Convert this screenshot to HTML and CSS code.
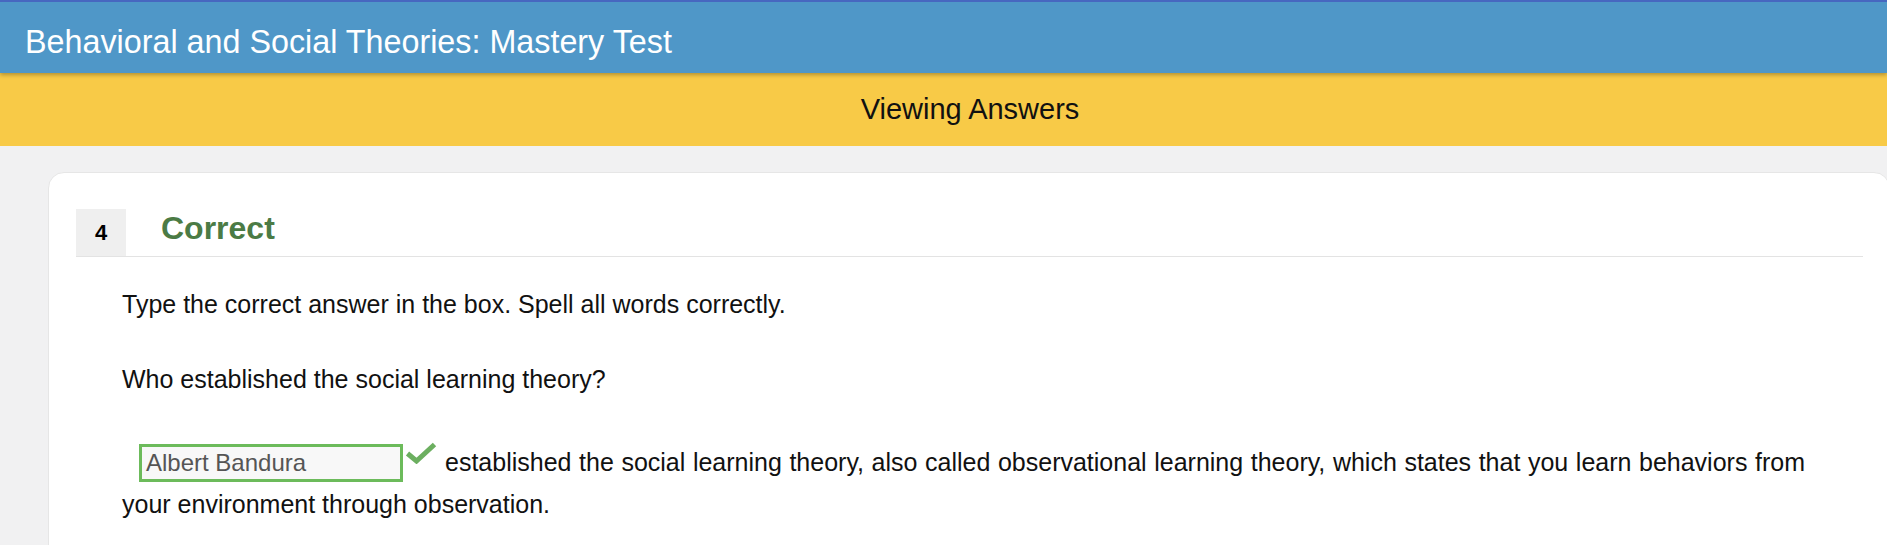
FILE: index.html
```html
<!DOCTYPE html>
<html lang="en">
<head>
<meta charset="utf-8">
<title>Behavioral and Social Theories: Mastery Test</title>
<link rel="stylesheet" href="styles.css">
</head>
<body>
<header class="topbar">
  <h1 class="test-title">Behavioral and Social Theories: Mastery Test</h1>
</header>
<div class="mode-bar">Viewing Answers</div>
<main class="page">
  <section class="card">
    <div class="q-header">
      <div class="q-number">4</div>
      <h2 class="q-status">Correct</h2>
    </div>
    <div class="q-body">
      <p class="q-instr">Type the correct answer in the box. Spell all words correctly.</p>
      <p class="q-question">Who established the social learning theory?</p>
      <p class="q-answer"><span class="answer-box">Albert Bandura</span><svg class="check" width="32" height="22" viewBox="0 0 32 22" aria-hidden="true"><path d="M2.5 11.5 L11.5 19 L29.5 2.5" fill="none" stroke="#6caf60" stroke-width="5" stroke-linecap="butt" stroke-linejoin="miter"/></svg>established the social learning theory, also called observational learning theory, which states that you learn behaviors from your environment through observation.</p>
    </div>
  </section>
</main>
</body>
</html>
```
FILE: styles.css
```css
html, body {
  margin: 0;
  padding: 0;
}
body {
  background: #f1f1f2;
  font-family: "Liberation Sans", Arial, Helvetica, sans-serif;
  color: #111;
  overflow: hidden;
}
.topbar {
  position: relative;
  z-index: 2;
  background: #4f97c8;
  border-top: 2px solid #4767c0;
  padding: 9px 0 0 25px;
  height: 62px;
  box-shadow: 0 2px 4px rgba(0, 0, 0, 0.28);
}
.test-title {
  margin: 0;
  font-size: 32.3px;
  font-weight: normal;
  line-height: 62px;
  color: #fff;
  white-space: nowrap;
}
.mode-bar {
  position: relative;
  z-index: 1;
  background: #f8ca47;
  height: 73px;
  line-height: 73px;
  font-size: 29px;
  text-align: center;
  padding-left: 53px;
  color: #111;
}
.page {
  padding: 26px 0 0 48px;
}
.card {
  background: #fff;
  border: 1px solid #e6e6e6;
  border-radius: 16px;
  margin-right: -3px;
  padding: 36px 26px 40px 27px;
  min-height: 400px;
}
.q-header {
  display: flex;
  align-items: flex-start;
  border-bottom: 1px solid #e3e3e3;
}
.q-number {
  width: 50px;
  height: 47px;
  line-height: 47px;
  background: #efefef;
  text-align: center;
  font-size: 22px;
  font-weight: bold;
  color: #000;
}
.q-status {
  margin: 0 0 0 35px;
  font-size: 32px;
  line-height: 38px;
  font-weight: bold;
  color: #4b7b45;
}
.q-body {
  padding: 0 58px 0 46px;
  font-size: 25px;
  line-height: 40px;
}
.q-body p {
  margin: 0;
}
.q-instr {
  padding-top: 27px;
}
.q-question {
  padding-top: 35px;
}
.q-answer {
  padding-top: 42px;
  line-height: 42px;
  text-align: justify;
}
.answer-box {
  display: inline-block;
  box-sizing: border-box;
  width: 264px;
  height: 38px;
  line-height: 32px;
  margin-left: 17px;
  padding: 0 4px;
  border: 3px solid #6cbb5b;
  background: #f8f8f8;
  color: #555;
  font-size: 24px;
  text-align: left;
  vertical-align: baseline;
}
.check {
  margin: 0 8px 0 2px;
  vertical-align: 7px;
}
```
